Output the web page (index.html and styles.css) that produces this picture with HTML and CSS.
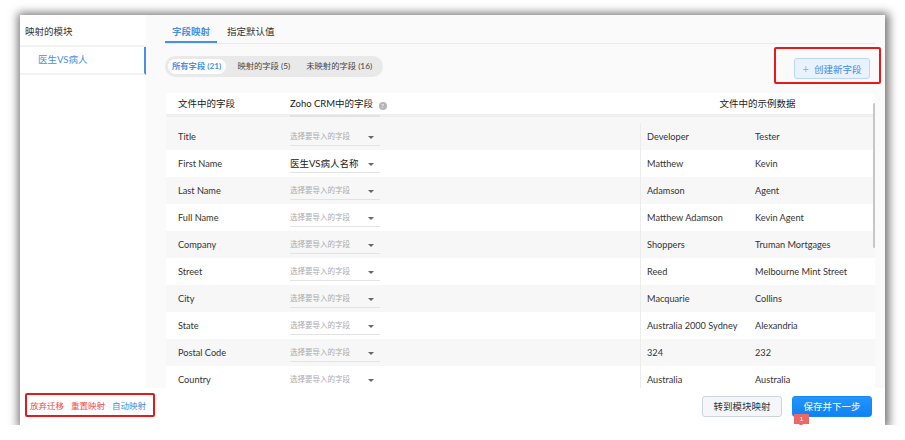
FILE: index.html
```html
<!DOCTYPE html>
<html lang="zh-CN">
<head>
<meta charset="UTF-8">
<title>字段映射</title>
<link rel="stylesheet" href="styles.css">
</head>
<body>
<div class="win">
	<div class="top">
		<div class="side">
			<div class="side-title">映射的模块</div>
			<a href="javascript:;" class="side-item active">医生VS病人</a>
		</div>
		<div class="main">
			<div class="tabs">
				<a href="javascript:;" class="tab active">字段映射</a>
				<a href="javascript:;" class="tab">指定默认值</a>
			</div>
			<div class="toolbar">
				<div class="seg">
					<a href="javascript:;" class="seg-item active">所有字段 (21)</a>
					<a href="javascript:;" class="seg-item">映射的字段 (5)</a>
					<a href="javascript:;" class="seg-item">未映射的字段 (16)</a>
				</div>
				<div class="mark mark-new">
					<a href="javascript:;" class="btn-new"><span class="plus">+</span>创建新字段</a>
				</div>
			</div>
			<div class="table">
				<div class="thead">
					<div class="c-label">文件中的字段</div>
					<div class="c-sel">Zoho CRM中的字段 <span class="help">?</span></div>
					<div class="c-sample">文件中的示例数据</div>
				</div>
				<div class="tbody">
					<div class="row">
						<div class="c-label">Title</div>
						<div class="c-sel"><div class="select">选择要导入的字段</div></div>
						<div class="c-data">Developer</div>
						<div class="c-data">Tester</div>
					</div>
					<div class="row">
						<div class="c-label">First Name</div>
						<div class="c-sel"><div class="select picked">医生VS病人名称</div></div>
						<div class="c-data">Matthew</div>
						<div class="c-data">Kevin</div>
					</div>
					<div class="row">
						<div class="c-label">Last Name</div>
						<div class="c-sel"><div class="select">选择要导入的字段</div></div>
						<div class="c-data">Adamson</div>
						<div class="c-data">Agent</div>
					</div>
					<div class="row">
						<div class="c-label">Full Name</div>
						<div class="c-sel"><div class="select">选择要导入的字段</div></div>
						<div class="c-data">Matthew Adamson</div>
						<div class="c-data">Kevin Agent</div>
					</div>
					<div class="row">
						<div class="c-label">Company</div>
						<div class="c-sel"><div class="select">选择要导入的字段</div></div>
						<div class="c-data">Shoppers</div>
						<div class="c-data">Truman Mortgages</div>
					</div>
					<div class="row">
						<div class="c-label">Street</div>
						<div class="c-sel"><div class="select">选择要导入的字段</div></div>
						<div class="c-data">Reed</div>
						<div class="c-data">Melbourne Mint Street</div>
					</div>
					<div class="row">
						<div class="c-label">City</div>
						<div class="c-sel"><div class="select">选择要导入的字段</div></div>
						<div class="c-data">Macquarie</div>
						<div class="c-data">Collins</div>
					</div>
					<div class="row">
						<div class="c-label">State</div>
						<div class="c-sel"><div class="select">选择要导入的字段</div></div>
						<div class="c-data">Australia 2000 Sydney</div>
						<div class="c-data">Alexandria</div>
					</div>
					<div class="row">
						<div class="c-label">Postal Code</div>
						<div class="c-sel"><div class="select">选择要导入的字段</div></div>
						<div class="c-data">324</div>
						<div class="c-data">232</div>
					</div>
					<div class="row">
						<div class="c-label">Country</div>
						<div class="c-sel"><div class="select">选择要导入的字段</div></div>
						<div class="c-data">Australia</div>
						<div class="c-data">Australia</div>
					</div>
				</div>
				<div class="scroll"></div>
			</div>
		</div>
	</div>
	<div class="foot">
		<div class="mark mark-links">
			<a href="javascript:;" class="link red">放弃迁移</a>
			<a href="javascript:;" class="link red">重置映射</a>
			<a href="javascript:;" class="link blue">自动映射</a>
		</div>
		<div class="actions">
			<a href="javascript:;" class="btn">转到模块映射</a>
			<a href="javascript:;" class="btn primary">保存并下一步<span class="badge">1</span></a>
		</div>
	</div>
</div>
</body>
</html>
```

FILE: styles.css
```css
body {
	margin: 0;
	background: #fff;
	font-family: Lato, "Noto Sans CJK SC", sans-serif;
	color: #333;
}
a {
	text-decoration: none;
	color: inherit;
}
.win {
	margin: 15px 0 0 20px;
	width: 865px;
	height: 410px;
	background: #fff;
	box-shadow: 1px 1px 9px 3px rgba(0, 0, 0, .55);
	display: flex;
	flex-direction: column;
}
.top {
	display: flex;
	height: 373px;
}

/* sidebar */
.side {
	width: 126px;
	flex-shrink: 0;
	background: #fff;
}
.side-title {
	height: 30px;
	line-height: 34px;
	padding-left: 5px;
	font-size: 9.5px;
	color: #333;
	border-bottom: 2px solid #f3f3f3;
}
.side-item {
	display: block;
	height: 26px;
	line-height: 26px;
	padding-left: 18px;
	font-size: 9.5px;
	color: #4a90e2;
	border-bottom: 2px solid #f3f3f3;
}
.side-item.active {
	border-right: 2px solid #4a90e2;
}

/* main */
.main {
	flex: 1;
	background: #fafafa;
	padding: 0 10px 0 19px;
	display: flex;
	flex-direction: column;
}
.tabs {
	display: flex;
	height: 28px;
	border-bottom: 1px solid #ebebeb;
}
.tab {
	padding: 0 7px;
	line-height: 34px;
	font-size: 9.5px;
	color: #333;
	margin-right: 3px;
}
.tab.active {
	color: #4a90e2;
	font-weight: bold;
	border-bottom: 2px solid #4a90e2;
	height: 26px;
}
.toolbar {
	display: flex;
	justify-content: space-between;
	align-items: flex-start;
	height: 49px;
}
.seg {
	margin-top: 12px;
	display: flex;
	align-items: center;
	height: 21px;
	padding: 0 3px;
	border-radius: 11px;
	background: #e9e9e9;
}
.seg-item {
	height: 15px;
	line-height: 15px;
	padding: 0 8px;
	font-size: 8.3px;
	color: #444;
	border-radius: 8px;
}
.seg-item.active {
	padding: 0 5px 0 4px;
	margin-right: 3px;
	background: #fff;
	color: #4a90e2;
	font-weight: bold;
}
.mark {
	border: 2px solid #e31b1b;
	border-radius: 2px;
}
.mark-new {
	margin: 3px -6px 0 0;
	width: 107px;
	height: 37px;
	padding: 9px 0 0 18px;
	box-sizing: border-box;
}
.btn-new {
	display: block;
	width: 76px;
	height: 21px;
	line-height: 20px;
	box-sizing: border-box;
	border: 1px solid #b9d7f7;
	border-radius: 3px;
	background: #e9f3fe;
	color: #3c8ce6;
	font-size: 9.5px;
	text-align: center;
}
.plus {
	color: #8bb7ea;
	font-size: 11px;
	margin-right: 5px;
}

/* table */
.table {
	position: relative;
	flex: 1;
	overflow: hidden;
	margin-left: 1px;
	display: flex;
	flex-direction: column;
}
.thead {
	display: flex;
	height: 21px;
	line-height: 21px;
	background: #fff;
	font-size: 9.5px;
	color: #222;
	border-bottom: 3px solid #efefef;
	flex-shrink: 0;
}
.thead .c-sel {
	position: relative;
}
.thead .c-sel::after {
	content: "";
	position: absolute;
	left: 0;
	bottom: -3px;
	width: 90px;
	height: 2px;
	background: #e2e2e2;
}
.c-label {
	width: 112px;
	padding-left: 12px;
	flex-shrink: 0;
}
.c-sel {
	width: 350px;
	flex-shrink: 0;
}
.c-sample {
	flex: 1;
	text-align: center;
}
.help {
	display: inline-block;
	width: 8px;
	height: 8px;
	line-height: 8px;
	border-radius: 50%;
	background: #b5b5b5;
	color: #fff;
	font-size: 6px;
	text-align: center;
	vertical-align: -1px;
	margin-left: 3px;
}
.tbody {
	flex: 1;
	overflow: hidden;
}
.row {
	display: flex;
	align-items: center;
	height: 27px;
	font-size: 9.2px;
	color: #333;
}
.row:nth-child(odd) {
	background: #f7f7f7;
}
.row:nth-child(even) {
	background: #fff;
}
.row:first-child {
	height: 33px;
	padding-top: 6px;
	box-sizing: border-box;
}
.c-data {
	width: 115px;
	box-sizing: border-box;
	padding-left: 6px;
	height: 100%;
	line-height: 27px;
	flex-shrink: 0;
}
.row .c-data:nth-child(3) {
	border-left: 1px solid #ececec;
}
.row .c-data:nth-child(4) {
	padding-left: 0;
}
.select {
	position: relative;
	width: 90px;
	height: 16px;
	line-height: 16px;
	margin-top: 1px;
	font-size: 7.5px;
	color: #aaa;
	border-bottom: 1px solid #e3e3e3;
}
.select::after {
	content: "";
	position: absolute;
	right: 6px;
	top: 7px;
	border-left: 3px solid transparent;
	border-right: 3px solid transparent;
	border-top: 3px solid #666;
}
.select.picked {
	font-size: 9.5px;
	color: #222;
}
.scroll {
	position: absolute;
	right: -1px;
	top: 10px;
	width: 3px;
	height: 145px;
	border-radius: 2px;
	background: #c6c6c6;
}

/* footer */
.foot {
	flex: 1;
	display: flex;
	justify-content: space-between;
	align-items: flex-start;
	background: #fff;
}
.mark-links {
	margin: 5px 0 0 5px;
	width: 130px;
	height: 24px;
	box-sizing: border-box;
	display: flex;
	align-items: center;
	padding-left: 3px;
	gap: 7px;
}
.link {
	font-size: 8.5px;
}
.red {
	color: #f24b4b;
}
.blue {
	color: #3c8ce6;
}
.actions {
	display: flex;
	gap: 10px;
	margin: 8px 13px 0 0;
}
.btn {
	position: relative;
	display: block;
	width: 80px;
	height: 21px;
	line-height: 19px;
	box-sizing: border-box;
	border: 1px solid #cfd4da;
	border-radius: 3px;
	background: #f4f6f9;
	color: #333;
	font-size: 9.5px;
	text-align: center;
}
.btn.primary {
	border-color: #1789f5;
	background: linear-gradient(#2494ff, #0f82f2);
	color: #fff;
}
.badge {
	position: absolute;
	left: 1px;
	top: 17px;
	width: 15px;
	height: 10px;
	line-height: 10px;
	background: #ec6767;
	color: #fff;
	font-size: 6.5px;
	text-align: center;
}
.badge::after {
	content: "";
	position: absolute;
	left: 5px;
	bottom: -3px;
	border-left: 2px solid transparent;
	border-right: 2px solid transparent;
	border-top: 3px solid #ec6767;
}
```
